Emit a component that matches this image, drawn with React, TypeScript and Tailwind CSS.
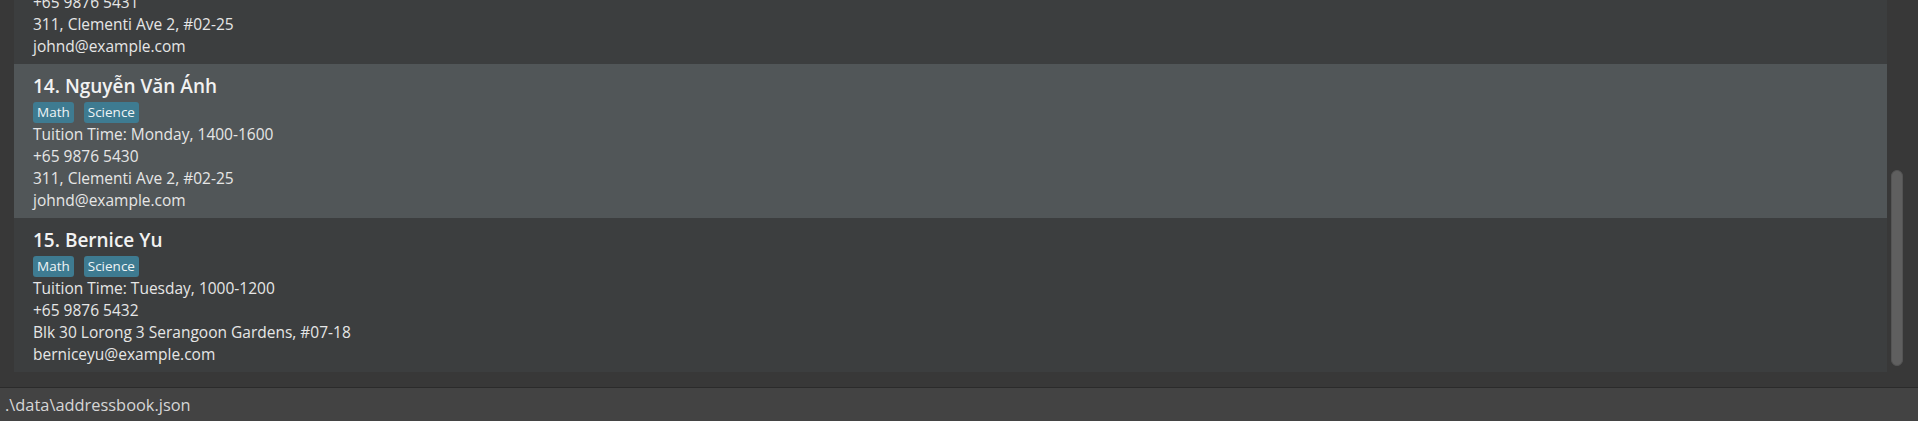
import React from "react";

type Person = {
  idx: number;
  name: string;
  tags: string[];
  time: string;
  phone: string;
  address: string;
  email: string;
  odd: boolean;
};

const people: Person[] = [
  {
    idx: 13,
    name: "John Doe",
    tags: ["Math", "Science"],
    time: "Tuition Time: Monday, 1200-1400",
    phone: "+65 9876 5431",
    address: "311, Clementi Ave 2, #02-25",
    email: "johnd@example.com",
    odd: false,
  },
  {
    idx: 14,
    name: "Nguyễn Văn Ánh",
    tags: ["Math", "Science"],
    time: "Tuition Time: Monday, 1400-1600",
    phone: "+65 9876 5430",
    address: "311, Clementi Ave 2, #02-25",
    email: "johnd@example.com",
    odd: true,
  },
  {
    idx: 15,
    name: "Bernice Yu",
    tags: ["Math", "Science"],
    time: "Tuition Time: Tuesday, 1000-1200",
    phone: "+65 9876 5432",
    address: "Blk 30 Lorong 3 Serangoon Gardens, #07-18",
    email: "berniceyu@example.com",
    odd: false,
  },
];

const font = { fontFamily: '"Open Sans", "Noto Sans", sans-serif' };

function Card({ p }: { p: Person }) {
  return (
    <div
      className={`h-[154px] pl-[19px] pt-[8px] pb-[7px] flex flex-col ${
        p.odd ? "bg-[#515658]" : "bg-[#3c3e3f]"
      }`}
    >
      <div className="text-[19px] leading-[28px] font-semibold text-[#f2f2f2]">
        {p.idx}. {p.name}
      </div>
      <div className="flex gap-[10px] mt-[2px]">
        {p.tags.map((t) => (
          <span
            key={t}
            className="h-[21px] leading-[21px] px-[4px] rounded-[3px] bg-[#3e7b91] text-[13.5px] text-[#eef4f6]"
          >
            {t}
          </span>
        ))}
      </div>
      <div className="text-[15.5px] leading-[22px] text-[#e6e6e6]">
        <div>{p.time}</div>
        <div>{p.phone}</div>
        <div>{p.address}</div>
        <div>{p.email}</div>
      </div>
    </div>
  );
}

export default function App() {
  return (
    <div
      className="w-[1918px] h-[421px] bg-[#383838] flex flex-col overflow-hidden"
      style={font}
    >
      <div className="h-[387px] flex shrink-0">
        <div className="flex-1 pl-[14px] overflow-hidden">
          <div className="-mt-[90px] flex flex-col">
            {people.map((p) => (
              <Card key={p.idx} p={p} />
            ))}
          </div>
        </div>
        <div className="w-[31px] pl-[4px] pt-[170px]">
          <div className="w-[12px] h-[196px] rounded-[6px] bg-[#5f5f5f] border border-[#545454]" />
        </div>
      </div>
      <div className="flex-1 border-t border-[#2b2b2b] bg-[#434343] flex items-center pl-[5px] pt-[2px]">
        <span className="text-[16.4px] text-[#d6d6d6]">.\data\addressbook.json</span>
      </div>
    </div>
  );
}
